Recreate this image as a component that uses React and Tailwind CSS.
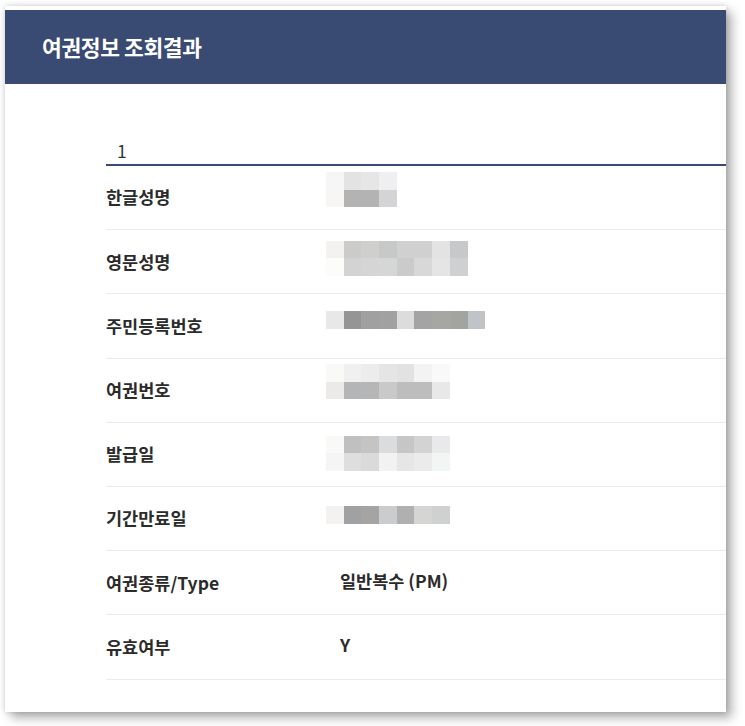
import React from "react";

const FONT = { fontFamily: '"Noto Sans CJK KR", "Noto Sans", sans-serif' };

const rows = [
  {
    label: "한글성명",
    offset: 6,
    blocks: [
      ["#f6f6f6", "#e3e3e3", "#e6e6e6", "#efeff1"],
      ["#f7f6f5", "#b3b3b3", "#b3b3b3", "#d4d4d6"],
    ],
  },
  {
    label: "영문성명",
    offset: 10.5,
    blocks: [
      ["#f3f2f0", "#cbcbcb", "#cfcfcd", "#c7c9c9", "#d0d0d0", "#d0d0d0", "#e3e3e3", "#c7c8ca"],
      ["#fcfcfa", "#d3d3d3", "#d5d5d5", "#d5d7d6", "#cbcbcb", "#d8d8d8", "#e5e5e5", "#cfd0d2"],
    ],
  },
  {
    label: "주민등록번호",
    offset: 16.6,
    blocks: [
      ["#e8e8e6", "#959595", "#a0a0a0", "#a1a1a1", "#dcdcdc", "#a4a4a4", "#a6a6a4", "#a3a3a1", "#c0c4c7"],
    ],
  },
  {
    label: "여권번호",
    offset: 5.4,
    blocks: [
      ["#f9f9f7", "#f0f0f0", "#ececec", "#e5e5e5", "#e2e2e2", "#f3f3f3", "#f8f9f8"],
      ["#ece9e9", "#b4b5b6", "#b6b6b6", "#c9c9c9", "#bdbdbd", "#bcbdbc", "#e7e8e7"],
    ],
  },
  {
    label: "발급일",
    offset: 12.9,
    blocks: [
      ["#f9f9f7", "#c0c0c0", "#c5c4c3", "#dbdcde", "#c6c6c6", "#d3d3d3", "#e9e9eb"],
      ["#f5f5f5", "#dedede", "#dadada", "#f2f2f2", "#e6e6e6", "#ebebeb", "#f3f4f4"],
    ],
  },
  {
    label: "기간만료일",
    offset: 19,
    blocks: [["#f3f2f0", "#a0a1a3", "#a5a4a2", "#cbccce", "#b0b0b0", "#d5d5d3", "#cfd0d0"]],
  },
  { label: "여권종류/Type", text: "일반복수 (PM)" },
  { label: "유효여부", text: "Y" },
];

// pixelated (masked) value, drawn as a grid of grey squares
const Masked = ({ blocks, offset }) => (
  <div className="flex flex-col" style={{ paddingTop: offset }}>
    {blocks.map((line, i) => (
      <div key={i} className="flex">
        {line.map((c, j) => (
          <div key={j} className="h-[17.7px] w-[17.7px]" style={{ backgroundColor: c }} />
        ))}
      </div>
    ))}
  </div>
);

export default function App() {
  return (
    <div className="h-[726px] w-[745px] overflow-hidden bg-white pl-[5px] pt-[6px]" style={FONT}>
      <div className="h-[706px] w-[721px] bg-white pt-[4px] shadow-[0_0_6px_rgba(0,0,0,0.18),6px_6px_10px_rgba(0,0,0,0.3)]">
        <div className="flex h-[74px] items-center bg-[#394a73] pl-[37px]">
          <h1 className="text-[21.5px] font-bold tracking-[-0.4px] text-white">여권정보 조회결과</h1>
        </div>

        <div className="pl-[101px] pt-[55px]">
          <div className="h-[27px] border-b-2 border-[#3a4a74] pl-[11px] text-[17.5px] leading-[24px] text-[#333]">
            1
          </div>
          <div className="flex flex-col">
            {rows.map((row) => (
              <div key={row.label} className="box-border flex h-[64.2px] border-b border-[#ebebeb]">
                <div className="flex w-[220px] items-center text-[17.5px] font-bold text-[#2b2b2b]">
                  {row.label}
                </div>
                {row.text ? (
                  <div className="flex flex-1 items-center pb-[3px] pl-[14px] text-[17.5px] font-bold text-[#2b2b2b]">
                    {row.text}
                  </div>
                ) : (
                  <Masked blocks={row.blocks} offset={row.offset} />
                )}
              </div>
            ))}
          </div>
        </div>
      </div>
    </div>
  );
}
